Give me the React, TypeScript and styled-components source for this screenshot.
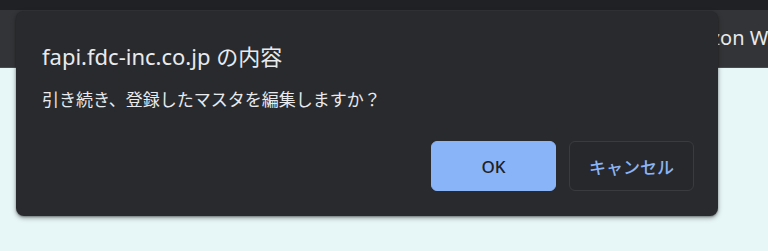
import React from "react";
import styled, { createGlobalStyle } from "styled-components";

const Global = createGlobalStyle`
  html, body { margin: 0; padding: 0; }
  body {
    width: 768px;
    height: 251px;
    overflow: hidden;
    background: #e7f6f7;
    font-family: "Noto Sans", "Noto Sans CJK JP", sans-serif;
  }
`;

const Page = styled.div`
  position: relative;
  width: 768px;
  height: 251px;
  display: flex;
  flex-direction: column;
  background: #e7f6f7;
`;

const TabStrip = styled.div`
  height: 10px;
  background: #202124;
`;

const BookmarksBar = styled.div`
  height: 57px;
  background: #333437;
  border-bottom: 1px solid #4a4c50;
  display: flex;
  align-items: center;
  overflow: hidden;
`;

const Bookmark = styled.span<{ $offset: number }>`
  margin-left: ${(p) => p.$offset}px;
  color: #e8eaed;
  font-size: 20px;
  white-space: nowrap;
  padding-bottom: 2px;
`;

const Content = styled.div`
  flex: 1;
  background: #e7f6f7;
`;

const Dialog = styled.div`
  position: absolute;
  left: 16px;
  top: 11px;
  width: 702px;
  height: 205px;
  box-sizing: border-box;
  background: #292a2d;
  border-radius: 8px;
  box-shadow: 0 2px 5px rgba(0, 0, 0, 0.35), 0 1px 2px rgba(0, 0, 0, 0.3);
  padding: 31px 24px 25px 26px;
  display: flex;
  flex-direction: column;
  color: #e8eaed;
`;

const Title = styled.div`
  font-size: 22px;
  line-height: 28px;
  color: #e8eaed;
`;

const Message = styled.div`
  margin-top: 18px;
  font-size: 17px;
  line-height: 24px;
  color: #e8eaed;
`;

const Actions = styled.div`
  margin-top: auto;
  display: flex;
  justify-content: flex-end;
  gap: 13px;
`;

const Button = styled.button<{ $primary?: boolean }>`
  width: 125px;
  height: 50px;
  box-sizing: border-box;
  border-radius: 6px;
  font-family: "Noto Sans", "Noto Sans CJK JP", sans-serif;
  font-size: 17px;
  font-weight: 500;
  cursor: pointer;
  display: flex;
  align-items: center;
  justify-content: center;
  padding: 0;
  background: ${(p) => (p.$primary ? "#8ab4f8" : "#27282b")};
  color: ${(p) => (p.$primary ? "#202124" : "#8ab4f8")};
  border: 1px solid ${(p) => (p.$primary ? "#8ab4f8" : "#3a3b3e")};
`;

export default function App() {
  return (
    <>
      <Global />
      <Page>
        <TabStrip />
        <BookmarksBar>
          <Bookmark $offset={668}>Amazon Web Services</Bookmark>
        </BookmarksBar>
        <Content />
        <Dialog role="dialog">
          <Title>fapi.fdc-inc.co.jp の内容</Title>
          <Message>引き続き、登録したマスタを編集しますか？</Message>
          <Actions>
            <Button $primary>OK</Button>
            <Button>キャンセル</Button>
          </Actions>
        </Dialog>
      </Page>
    </>
  );
}
